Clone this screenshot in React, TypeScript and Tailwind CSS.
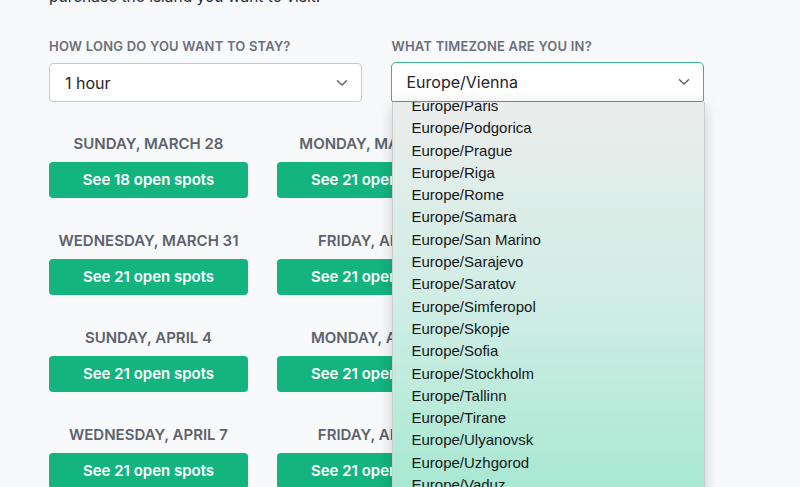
import React from "react";

const zones = [
  "Europe/Paris",
  "Europe/Podgorica",
  "Europe/Prague",
  "Europe/Riga",
  "Europe/Rome",
  "Europe/Samara",
  "Europe/San Marino",
  "Europe/Sarajevo",
  "Europe/Saratov",
  "Europe/Simferopol",
  "Europe/Skopje",
  "Europe/Sofia",
  "Europe/Stockholm",
  "Europe/Tallinn",
  "Europe/Tirane",
  "Europe/Ulyanovsk",
  "Europe/Uzhgorod",
  "Europe/Vaduz",
  "Europe/Vatican",
];

const days = [
  ["SUNDAY, MARCH 28", 18],
  ["MONDAY, MARCH 29", 21],
  ["TUESDAY, MARCH 30", 21],
  ["WEDNESDAY, MARCH 31", 21],
  ["FRIDAY, APRIL 2", 21],
  ["SATURDAY, APRIL 3", 21],
  ["SUNDAY, APRIL 4", 21],
  ["MONDAY, APRIL 5", 21],
  ["TUESDAY, APRIL 6", 21],
  ["WEDNESDAY, APRIL 7", 21],
  ["FRIDAY, APRIL 9", 21],
  ["SATURDAY, APRIL 10", 21],
] as const;

function Chevron() {
  return (
    <svg width="12" height="8" viewBox="0 0 12 8" fill="none">
      <path d="M1.5 1.8 L6 6 L10.5 1.8" stroke="#5b5f66" strokeWidth="1.4" strokeLinecap="round" strokeLinejoin="round" />
    </svg>
  );
}

export default function App() {
  return (
    <div className="h-[487px] w-[800px] overflow-hidden bg-[#f8f9fb]" style={{ fontFamily: "Inter, 'Liberation Sans', sans-serif" }}>
      <div className="pl-[49px] w-[704px]">
        <p className="-mt-[15px] text-[15.5px] leading-[24px] text-[#2a2d33]">purchase the island you want to visit.</p>
        <div className="mt-[29px] grid grid-cols-2 gap-x-[30px]">
          <div>
            <div className="text-[13px] font-semibold tracking-[0.2px] text-[#6b7079] leading-[16px]">HOW LONG DO YOU WANT TO STAY?</div>
            <div className="mt-[9px] flex h-[39px] items-center justify-between rounded-[4px] border border-[#c6cbd1] bg-white pl-[15px] pr-[13px]">
              <span className="text-[16px] text-[#22252a]">1 hour</span>
              <Chevron />
            </div>
          </div>
          <div className="relative">
            <div className="text-[13px] font-semibold tracking-[0.2px] text-[#6b7079] leading-[16px]">WHAT TIMEZONE ARE YOU IN?</div>
            <div className="relative mt-[8px] -ml-px">
              <div className="flex h-[40px] items-center justify-between rounded-t-[5px] rounded-b-[2px] border-[1.5px] border-[#3fae8d] bg-white pl-[15px] pr-[13px]">
                <span className="text-[16px] text-[#22252a]">Europe/Vienna</span>
                <Chevron />
              </div>
              <div className="absolute left-[1px] top-full z-10 h-[400px] w-[313px] overflow-hidden border-x border-[#c9cfcd] bg-gradient-to-b from-[#ebeded] via-[#d0ede5] to-[#a4e8d1] shadow-[0_4px_14px_rgba(0,0,0,0.18)]">
                <div className="-mt-[7px] pl-[19px]" style={{ fontFamily: "'Liberation Sans', Arial, sans-serif" }}>
                  {zones.map((z) => (
                    <div key={z} className="h-[22.3px] text-[15px] leading-[22.3px] text-[#161718]">
                      {z}
                    </div>
                  ))}
                </div>
              </div>
            </div>
          </div>
        </div>
        <div className="mt-[33px] grid grid-cols-3 gap-x-[29px] gap-y-[34px]">
          {days.map(([d, n]) => (
            <div key={d} className="flex flex-col items-center">
              <div className="text-[15px] font-semibold leading-[18px] text-[#5d626d]">{d}</div>
              <div className="mt-[9px] flex h-[36px] w-full items-center justify-center rounded-[4px] bg-[#14b47f] text-[15px] font-semibold text-white">
                See {n} open spots
              </div>
            </div>
          ))}
        </div>
      </div>
    </div>
  );
}
